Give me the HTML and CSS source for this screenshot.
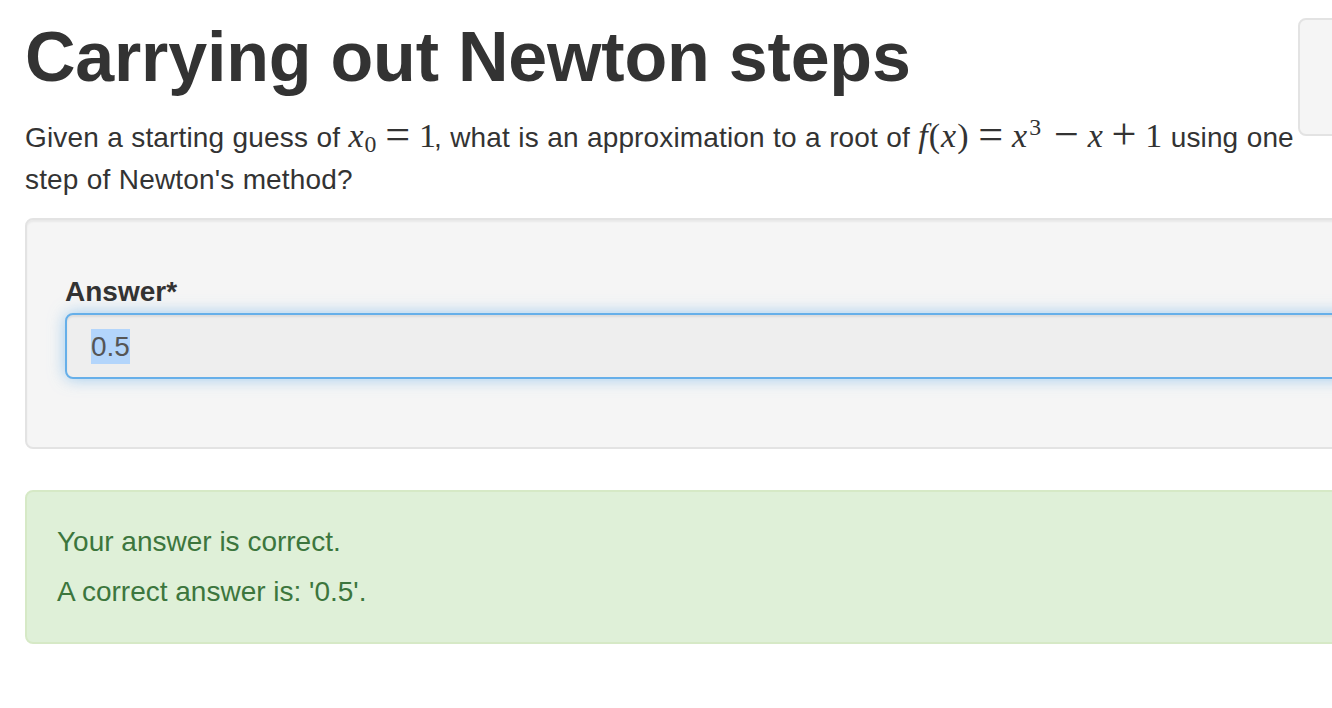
FILE: index.html
```html
<!DOCTYPE html>
<html>
<head>
<meta charset="utf-8">
<link rel="stylesheet" href="styles.css">
</head>
<body>
<div class="page">
  <div class="intro">
    <h1 class="title">Carrying out Newton steps</h1>
    <p class="question">Given a starting guess of <span class="math first"><i>x</i><span class="sub">0</span><span class="op">=</span><span class="num">1</span></span>, what is an approximation to a root of <span class="math"><i>f</i><span class="paren">(</span><i>x</i><span class="paren">)</span><span class="op">=</span><i>x</i><span class="sup">3</span><span class="op">−</span><i>x</i><span class="op">+</span><span class="num">1</span></span> using one step of Newton's method?</p>
  </div>
  <div class="side-box"></div>
  <div class="well">
    <label class="field-label">Answer*</label>
    <div class="input"><span class="selected">0.5</span></div>
  </div>
  <div class="alert">
    <p class="alert-line">Your answer is correct.</p>
    <p class="alert-line last">A correct answer is: '0.5'.</p>
  </div>
</div>
</body>
</html>
```

FILE: styles.css
```css
html, body {
  margin: 0;
  padding: 0;
  background: #ffffff;
  overflow: hidden;
}
body {
  font-family: "Liberation Sans", Arial, sans-serif;
  color: #333333;
  width: 1332px;
  height: 708px;
}
.page {
  display: grid;
  grid-template-columns: 1273px 400px;
  width: 1673px;
  padding-left: 25px;
}
.intro {
  grid-column: 1;
  grid-row: 1;
}
.title {
  margin: 18px 0 0 0;
  font-size: 70px;
  line-height: 79px;
  font-weight: bold;
  letter-spacing: -0.2px;
  color: #333333;
}
.question {
  margin: 20px 0 17px 0;
  font-size: 28px;
  line-height: 42px;
  letter-spacing: 0.15px;
  word-spacing: 0.4px;
}
.math {
  font-family: "Liberation Serif", "Times New Roman", serif;
  font-size: 34px;
  line-height: 1;
  letter-spacing: 0;
  word-spacing: 0;
}
.math.first {
  margin-right: -2px;
}
.math i {
  font-style: italic;
}
.math .num {
  line-height: 0;
}
.math .paren {
  line-height: 0;
  margin: 0 1px;
}
.math .op {
  font-size: 1.3em;
  line-height: 0;
  margin: 0 0.2em;
  vertical-align: -2px;
}
.math .sub {
  font-size: 0.7em;
  vertical-align: -0.2em;
  line-height: 0;
  margin-left: 1px;
}
.math .sup {
  font-size: 0.7em;
  vertical-align: 0.5em;
  line-height: 0;
  margin-left: 2px;
  margin-right: 4px;
}
.side-box {
  grid-column: 2;
  grid-row: 1;
  margin-top: 18px;
  height: 114px;
  background: #f5f5f5;
  border: 2px solid #e3e3e3;
  border-radius: 8px;
}
.well {
  grid-column: 1 / 3;
  grid-row: 2;
  background: #f5f5f5;
  border: 2px solid #e3e3e3;
  border-radius: 8px;
  padding: 52px 38px 68px 38px;
  box-shadow: inset 0 2px 2px rgba(0,0,0,0.05);
}
.field-label {
  display: block;
  font-size: 28px;
  line-height: 40px;
  font-weight: bold;
  margin-bottom: 1px;
}
.input {
  height: 62px;
  box-sizing: content-box;
  border: 2px solid #66afe9;
  border-radius: 8px;
  background: #eeeeee;
  padding: 0 24px;
  display: flex;
  align-items: center;
  font-size: 28px;
  color: #555555;
  box-shadow: inset 0 2px 2px rgba(0,0,0,0.075), 0 0 16px rgba(102,175,233,0.6);
}
.selected {
  background: #b3d5fb;
  line-height: 35px;
}
.alert {
  grid-column: 1 / 3;
  grid-row: 3;
  margin-top: 41px;
  background: #dff0d8;
  border: 2px solid #d6e9c6;
  border-radius: 8px;
  padding: 30px 30px;
  color: #3c763d;
}
.alert-line {
  margin: 0 0 10px 0;
  font-size: 28px;
  line-height: 40px;
}
.alert-line.last {
  margin-bottom: 0;
}
```
